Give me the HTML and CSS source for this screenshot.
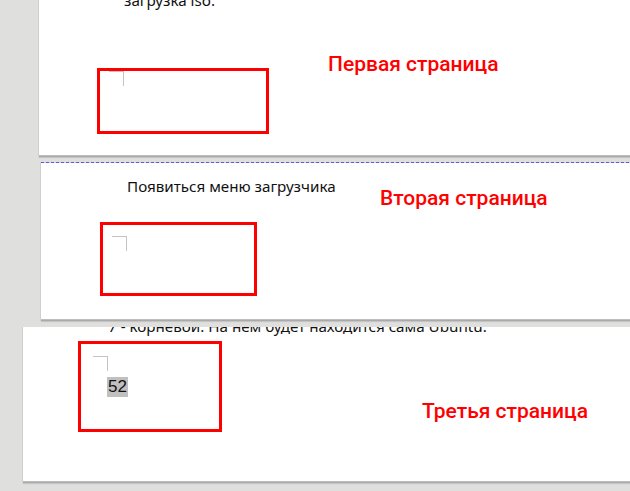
FILE: index.html
```html
<!DOCTYPE html>
<html>
<head>
<meta charset="utf-8">
<title>Страницы документа</title>
<link rel="stylesheet" href="styles.css">
</head>
<body>
  <div class="sheet sheet-first">
    <div class="cut-line cut-first">загрузка iso.</div>
    <div class="frame-row row-first">
      <div class="frame frame-first"><div class="corner"></div></div>
      <div class="label label-first">Первая страница</div>
    </div>
  </div>

  <div class="sheet sheet-second">
    <div class="frame-col">
      <div class="para">Появиться меню загрузчика</div>
      <div class="frame frame-second"><div class="corner"></div></div>
    </div>
    <div class="label label-second">Вторая страница</div>
  </div>

  <div class="sheet sheet-third">
    <div class="cut-line cut-third">7 - корневой. На нем будет находится сама Ubuntu.</div>
    <div class="frame-row row-third">
      <div class="frame frame-third">
        <div class="corner"></div>
        <span class="page-num">52</span>
      </div>
      <div class="label label-third">Третья страница</div>
    </div>
  </div>
</body>
</html>
```

FILE: styles.css
```css
html,body { margin: 0; padding: 0; }
body { width: 630px; height: 491px; overflow: hidden; background: #dfdfdd; font-family: "Noto Sans", sans-serif; font-size: 15.2px; color: #111; }

.sheet { background: #fff; overflow: hidden; box-sizing: border-box; box-shadow: -1px 0 0 #cfcfcf, 0 1px 0 #bdbdbd, 0 2px 1px #aaa, 0 3px 1px #cacaca; }
.sheet-first { margin-left: 39px; height: 155px; }
.sheet-second { margin: 7px 0 0 41px; height: 157px; display: flex; background: #fff repeating-linear-gradient(to right, #5c5cd6 0 3px, #d0d0ee 3px 5px) top left / 100% 1px no-repeat; }
.sheet-third { margin: 8px 0 0 23px; height: 154px; }

.cut-line, .para { line-height: 19px; white-space: nowrap; }
.cut-first { margin: -9px 0 0 85px; }
.cut-third { margin: -10px 0 0 85px; }

.frame { box-sizing: border-box; border: 3px solid #f00; }
.corner { width: 15px; height: 15px; border-top: 1px solid #c4c4c4; border-right: 1px solid #c4c4c4; box-sizing: border-box; }

.label { font-family: Roboto, sans-serif; font-weight: 500; font-size: 21px; line-height: 28px; color: #f00; white-space: nowrap; }

.frame-row { display: flex; align-items: flex-start; }

.row-first { margin-top: 40px; }
.frame-first { width: 172px; height: 66px; margin: 18px 0 0 58px; }
.frame-first .corner { margin-left: 9px; }
.label-first { margin-left: 59px; }

.frame-col { width: 280px; padding: 15px 0 0 59px; flex: none; }
.para { margin-left: 27px; }
.frame-second { width: 157px; height: 74px; margin-top: 26px; }
.frame-second .corner { margin: 11px 0 0 9px; }
.label-second { margin-top: 22px; }

.row-third { margin-top: 5px; }
.frame-third { width: 144px; height: 91px; margin-left: 55px; }
.frame-third .corner { margin: 12px 0 0 12px; }
.page-num { display: inline-block; margin: 6px 0 0 26px; padding: 0 1px; background: #c0c0c0; font-family: "Liberation Sans", sans-serif; font-size: 17px; line-height: 20px; color: #111; }
.label-third { margin: 56px 0 0 200px; }
```
